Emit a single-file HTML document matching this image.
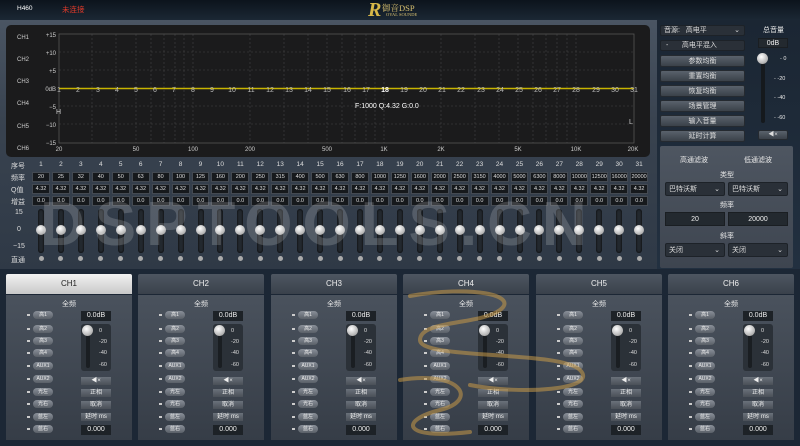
<!DOCTYPE html>
<html><head><meta charset="utf-8"><style>
*{margin:0;padding:0;box-sizing:border-box}
body{width:800px;height:446px;overflow:hidden;background:#1c2735;font-family:"Liberation Sans","Noto Sans CJK SC",sans-serif;color:#e8e8e8;position:relative}
.a{position:absolute}
#hdr{left:0;top:0;width:800px;height:20px;background:linear-gradient(#0c131c,#1b2734)}
#left{left:0;top:20px;width:657px;height:249px;background:linear-gradient(#4a5563,#394350 40%,#2f3946)}
#right{left:657px;top:20px;width:143px;height:249px;background:linear-gradient(#1b2633,#223040)}
#graph{left:6px;top:25px;width:644px;height:132px;background:#1b1b1c;border-radius:5px}
.row{position:absolute;left:31px;width:618px;display:grid;grid-template-columns:repeat(31,19.94px);font-size:6px;text-align:center}
.row span{display:block}
.bx span{background:#16191c;border:1px solid #444a52;margin:0 1px;height:10px;line-height:8px;color:#ddd;font-size:5.5px}
.lbl{position:absolute;font-size:7px;color:#ddd;left:11px}
.sl{position:absolute;left:31px;top:207px;width:618px;height:58px;display:grid;grid-template-columns:repeat(31,19.94px)}
.sl div{position:relative}
.sl div:before{content:"";position:absolute;left:7px;top:2px;width:6px;height:44px;background:#23282e;border-radius:3px;box-shadow:inset 0 0 2px #000}
.sl div:after{content:"";position:absolute;left:5px;top:18px;width:10px;height:10px;border-radius:50%;background:radial-gradient(circle at 40% 35%,#fff,#bbb 60%,#888)}
.sl i{position:absolute;left:7.5px;top:49px;width:5px;height:5px;border-radius:50%;background:#aaa}
.btn{position:absolute;background:linear-gradient(#5a626c,#3a4149);border:1px solid #252a30;border-radius:2px;font-size:7px;text-align:center;color:#ddd}
.sel{position:absolute;background:#2a3038;border:1px solid #1d2228;border-radius:2px;font-size:7px;color:#ddd;padding-left:3px}
.inp{position:absolute;background:#23292f;border:1px solid #1a1e22;font-size:7px;text-align:center;color:#eee}
.tab{position:absolute;top:274px;width:126px;height:20px;background:linear-gradient(#4e5661,#3a414b);font-size:8px;text-align:center;line-height:20px;color:#eee;border-radius:2px 2px 0 0}
.pan{position:absolute;top:295px;width:126px;height:145px;background:linear-gradient(#4a525d,#363d47)}
.pan .t{position:absolute;top:4px;width:100%;text-align:center;font-size:7px}
.pan .ib{position:absolute;left:27px;width:20px;height:8px;border-radius:4px;background:linear-gradient(#8a9099,#5a6068);font-size:5px;text-align:center;line-height:8px;color:#eee}
.pan .ib:before{content:"";position:absolute;left:-6px;top:3px;width:3px;height:2px;background:#ccc}
.pan .db{position:absolute;left:75px;width:30px;height:10px;background:#1d2227;font-size:7px;text-align:center;line-height:10px;color:#eee}
.pan .sb{position:absolute;left:75px;top:29px;width:30px;height:47px;background:#2b3138;border-radius:3px}
.pan .sb:before{content:"";position:absolute;left:5px;top:4px;width:4px;height:40px;background:#1a1e22;border-radius:2px}
.pan .sb:after{content:"";position:absolute;left:1px;top:1px;width:11px;height:11px;border-radius:50%;background:radial-gradient(circle at 40% 35%,#fff,#bbb 60%,#888)}
.pan .sb span{position:absolute;left:18px;font-size:5.5px;color:#ddd}
.pan .pb{position:absolute;left:75px;width:30px;height:8px;background:linear-gradient(#6a717a,#4a5058);font-size:6px;text-align:center;line-height:8px;color:#eee}
</style></head><body>
<div id="hdr" class="a"></div>
<div class="a" style="left:17px;top:5px;font-size:6.5px;color:#fff">H460</div>
<div class="a" style="left:62px;top:4px;font-size:7.5px;color:#e03a2a">未连接</div>
<div class="a" style="left:368px;top:0;font-size:20px;font-weight:bold;font-style:italic;color:#d8b848;font-family:'Liberation Serif',serif;line-height:20px">R</div>
<div class="a" style="left:382px;top:2px;font-size:8.5px;color:#d8c070;font-family:'Liberation Serif','Noto Serif CJK SC',serif">御音DSP</div>
<div class="a" style="left:386px;top:12px;font-size:4.5px;color:#d8c070;font-family:'Liberation Serif',serif">OYAL SOUNDE</div>
<div id="left" class="a"></div>
<div id="right" class="a"></div>
<div id="graph" class="a"></div>
<svg class="a" style="left:0;top:0" width="660" height="160" font-family="Liberation Sans" font-size="6" fill="#ccc">
<g stroke="#444" stroke-dasharray="2,2" stroke-width="0.6">
<line x1="59" y1="52" x2="634" y2="52"/><line x1="59" y1="70" x2="634" y2="70"/><line x1="59" y1="106" x2="634" y2="106"/><line x1="59" y1="124" x2="634" y2="124"/>
<line x1="92" y1="34" x2="92" y2="143"/><line x1="116" y1="34" x2="116" y2="143"/><line x1="136" y1="34" x2="136" y2="143"/><line x1="151" y1="34" x2="151" y2="143"/><line x1="164" y1="34" x2="164" y2="143"/><line x1="175" y1="34" x2="175" y2="143"/><line x1="184" y1="34" x2="184" y2="143"/><line x1="193" y1="34" x2="193" y2="143"/><line x1="250" y1="34" x2="250" y2="143"/><line x1="284" y1="34" x2="284" y2="143"/><line x1="308" y1="34" x2="308" y2="143"/><line x1="327" y1="34" x2="327" y2="143"/><line x1="342" y1="34" x2="342" y2="143"/><line x1="355" y1="34" x2="355" y2="143"/><line x1="366" y1="34" x2="366" y2="143"/><line x1="375" y1="34" x2="375" y2="143"/><line x1="384" y1="34" x2="384" y2="143"/><line x1="441" y1="34" x2="441" y2="143"/><line x1="475" y1="34" x2="475" y2="143"/><line x1="499" y1="34" x2="499" y2="143"/><line x1="518" y1="34" x2="518" y2="143"/><line x1="533" y1="34" x2="533" y2="143"/><line x1="546" y1="34" x2="546" y2="143"/><line x1="557" y1="34" x2="557" y2="143"/><line x1="567" y1="34" x2="567" y2="143"/><line x1="576" y1="34" x2="576" y2="143"/>
</g>
<rect x="59" y="34" width="575" height="109" fill="none" stroke="#555" stroke-width="0.8"/>
<g text-anchor="end"><text x="56" y="37">+15</text><text x="56" y="55">+10</text><text x="56" y="73">+5</text><text x="56" y="91">0dB</text><text x="56" y="109">−5</text><text x="56" y="127">−10</text><text x="56" y="145">−15</text></g>
<g><text x="17" y="39">CH1</text><text x="17" y="61">CH2</text><text x="17" y="83">CH3</text><text x="17" y="105">CH4</text><text x="17" y="128">CH5</text><text x="17" y="150">CH6</text></g>
<g text-anchor="middle"><text x="59" y="151">20</text><text x="136" y="151">50</text><text x="193" y="151">100</text><text x="250" y="151">200</text><text x="327" y="151">500</text><text x="384" y="151">1K</text><text x="441" y="151">2K</text><text x="518" y="151">5K</text><text x="576" y="151">10K</text><text x="633" y="151">20K</text></g>
<line x1="59" y1="88.5" x2="634" y2="88.5" stroke="#c8b400" stroke-width="1.6"/>
<g text-anchor="middle" font-size="7" fill="#bbb"><text x="59" y="92">1</text><text x="78" y="92">2</text><text x="98" y="92">3</text><text x="117" y="92">4</text><text x="136" y="92">5</text><text x="155" y="92">6</text><text x="174" y="92">7</text><text x="193" y="92">8</text><text x="212" y="92">9</text><text x="232" y="92">10</text><text x="251" y="92">11</text><text x="270" y="92">12</text><text x="289" y="92">13</text><text x="308" y="92">14</text><text x="327" y="92">15</text><text x="347" y="92">16</text><text x="366" y="92">17</text><text x="385" y="92" fill="#fff" font-weight="bold">18</text><text x="404" y="92">19</text><text x="423" y="92">20</text><text x="442" y="92">21</text><text x="461" y="92">22</text><text x="481" y="92">23</text><text x="500" y="92">24</text><text x="519" y="92">25</text><text x="538" y="92">26</text><text x="557" y="92">27</text><text x="576" y="92">28</text><text x="596" y="92">29</text><text x="615" y="92">30</text><text x="634" y="92">31</text></g>
<text x="355" y="108" font-size="7" fill="#fff">F:1000 Q:4.32 G:0.0</text>
<text x="56" y="114" font-size="7" fill="#ccc">H</text>
<text x="629" y="124" font-size="7" fill="#ccc">L</text>
</svg>
<div class="lbl" style="top:161px">序号</div>
<div class="lbl" style="top:173px">频率</div>
<div class="lbl" style="top:185px">Q值</div>
<div class="lbl" style="top:197px">增益</div>
<div class="lbl" style="top:209px;left:15px">15</div>
<div class="lbl" style="top:226px;left:17px">0</div>
<div class="lbl" style="top:243px;left:13px">−15</div>
<div class="lbl" style="top:255px">直通</div>
<div class="row" style="top:161px;font-size:6.5px;color:#ddd"><span>1</span><span>2</span><span>3</span><span>4</span><span>5</span><span>6</span><span>7</span><span>8</span><span>9</span><span>10</span><span>11</span><span>12</span><span>13</span><span>14</span><span>15</span><span>16</span><span>17</span><span>18</span><span>19</span><span>20</span><span>21</span><span>22</span><span>23</span><span>24</span><span>25</span><span>26</span><span>27</span><span>28</span><span>29</span><span>30</span><span>31</span></div>
<div class="row bx" style="top:172px"><span>20</span><span>25</span><span>32</span><span>40</span><span>50</span><span>63</span><span>80</span><span>100</span><span>125</span><span>160</span><span>200</span><span>250</span><span>315</span><span>400</span><span>500</span><span>630</span><span>800</span><span>1000</span><span>1250</span><span>1600</span><span>2000</span><span>2500</span><span>3150</span><span>4000</span><span>5000</span><span>6300</span><span>8000</span><span>10000</span><span>12500</span><span>16000</span><span>20000</span></div>
<div class="row bx" style="top:184px"><span>4.32</span><span>4.32</span><span>4.32</span><span>4.32</span><span>4.32</span><span>4.32</span><span>4.32</span><span>4.32</span><span>4.32</span><span>4.32</span><span>4.32</span><span>4.32</span><span>4.32</span><span>4.32</span><span>4.32</span><span>4.32</span><span>4.32</span><span>4.32</span><span>4.32</span><span>4.32</span><span>4.32</span><span>4.32</span><span>4.32</span><span>4.32</span><span>4.32</span><span>4.32</span><span>4.32</span><span>4.32</span><span>4.32</span><span>4.32</span><span>4.32</span></div>
<div class="row bx" style="top:196px"><span>0.0</span><span>0.0</span><span>0.0</span><span>0.0</span><span>0.0</span><span>0.0</span><span>0.0</span><span>0.0</span><span>0.0</span><span>0.0</span><span>0.0</span><span>0.0</span><span>0.0</span><span>0.0</span><span>0.0</span><span>0.0</span><span>0.0</span><span>0.0</span><span>0.0</span><span>0.0</span><span>0.0</span><span>0.0</span><span>0.0</span><span>0.0</span><span>0.0</span><span>0.0</span><span>0.0</span><span>0.0</span><span>0.0</span><span>0.0</span><span>0.0</span></div>
<div class="sl"><div><i></i></div><div><i></i></div><div><i></i></div><div><i></i></div><div><i></i></div><div><i></i></div><div><i></i></div><div><i></i></div><div><i></i></div><div><i></i></div><div><i></i></div><div><i></i></div><div><i></i></div><div><i></i></div><div><i></i></div><div><i></i></div><div><i></i></div><div><i></i></div><div><i></i></div><div><i></i></div><div><i></i></div><div><i></i></div><div><i></i></div><div><i></i></div><div><i></i></div><div><i></i></div><div><i></i></div><div><i></i></div><div><i></i></div><div><i></i></div><div><i></i></div></div>
<div class="a" style="left:40px;top:190px;font-size:62px;font-weight:bold;color:rgba(255,255,255,0.17);letter-spacing:10px;line-height:70px;white-space:nowrap">DSPTOOLS.CN</div>

<div class="sel" style="left:660px;top:25px;width:85px;height:11px;line-height:10px">音源:&nbsp;&nbsp;&nbsp;高电平<span style="position:absolute;right:4px">⌄</span></div>
<div class="sel" style="left:660px;top:40px;width:85px;height:11px;line-height:10px">&nbsp;-&nbsp;&nbsp;&nbsp;&nbsp;&nbsp;&nbsp;&nbsp;高电平混入</div>
<div class="btn" style="left:660px;top:55px;width:85px;height:12px;line-height:11px">参数均衡</div>
<div class="btn" style="left:660px;top:70px;width:85px;height:12px;line-height:11px">重置均衡</div>
<div class="btn" style="left:660px;top:85px;width:85px;height:12px;line-height:11px">恢复均衡</div>
<div class="btn" style="left:660px;top:100px;width:85px;height:12px;line-height:11px">场景管理</div>
<div class="btn" style="left:660px;top:115px;width:85px;height:12px;line-height:11px">输入音量</div>
<div class="btn" style="left:660px;top:130px;width:85px;height:12px;line-height:11px">延时计算</div>
<div class="a" style="left:763px;top:25px;font-size:7px">总音量</div>
<div class="inp" style="left:758px;top:38px;width:30px;height:10px;line-height:9px">0dB</div>
<div class="a" style="left:761px;top:55px;width:4px;height:68px;background:#15191d;border-radius:2px"></div>
<div class="a" style="left:757px;top:53px;width:11px;height:11px;border-radius:50%;background:radial-gradient(circle at 40% 35%,#fff,#bbb 60%,#888)"></div>
<div class="a" style="left:780px;top:56px;font-size:5.5px">- 0</div>
<div class="a" style="left:774px;top:76px;font-size:5.5px">- -20</div>
<div class="a" style="left:774px;top:95px;font-size:5.5px">- -40</div>
<div class="a" style="left:774px;top:115px;font-size:5.5px">- -60</div>
<div class="btn" style="left:758px;top:130px;width:30px;height:10px;line-height:9px;font-size:6px">◀×</div>
<div class="a" style="left:660px;top:146px;width:133px;height:122px;background:linear-gradient(#4e5661,#3e4550);border-radius:2px"></div>
<div class="a" style="left:680px;top:155px;font-size:7px">高通滤波</div>
<div class="a" style="left:744px;top:155px;font-size:7px">低通滤波</div>
<div class="a" style="left:720px;top:170px;font-size:7px">类型</div>
<div class="sel" style="left:665px;top:182px;width:60px;height:14px;line-height:13px">巴特沃斯<span style="position:absolute;right:4px">⌄</span></div>
<div class="sel" style="left:728px;top:182px;width:60px;height:14px;line-height:13px">巴特沃斯<span style="position:absolute;right:4px">⌄</span></div>
<div class="a" style="left:720px;top:200px;font-size:7px">频率</div>
<div class="inp" style="left:665px;top:212px;width:60px;height:14px;line-height:13px">20</div>
<div class="inp" style="left:728px;top:212px;width:60px;height:14px;line-height:13px">20000</div>
<div class="a" style="left:720px;top:231px;font-size:7px">斜率</div>
<div class="sel" style="left:665px;top:243px;width:60px;height:14px;line-height:13px">关闭<span style="position:absolute;right:4px">⌄</span></div>
<div class="sel" style="left:728px;top:243px;width:60px;height:14px;line-height:13px">关闭<span style="position:absolute;right:4px">⌄</span></div>

<div class="tab" style="left:6px;background:linear-gradient(#f2f2f2,#c8c8c8);color:#222">CH1</div>
<div class="tab" style="left:138px">CH2</div>
<div class="tab" style="left:271px">CH3</div>
<div class="tab" style="left:403px">CH4</div>
<div class="tab" style="left:536px">CH5</div>
<div class="tab" style="left:668px">CH6</div>

<div class="pan" style="left:6px"><div class="t">全频</div><div class="ib" style="top:16px">高1</div><div class="ib" style="top:30px">高2</div><div class="ib" style="top:42px">高3</div><div class="ib" style="top:54px">高4</div><div class="ib" style="top:67px">AUX1</div><div class="ib" style="top:80px">AUX2</div><div class="ib" style="top:93px">光左</div><div class="ib" style="top:105px">光右</div><div class="ib" style="top:118px">蓝左</div><div class="ib" style="top:130px">蓝右</div><div class="db" style="top:16px">0.0dB</div><div class="sb"><span style="top:4px">0</span><span style="top:15px">-20</span><span style="top:26px">-40</span><span style="top:38px">-60</span></div><div class="pb" style="top:82px">◀×</div><div class="pb" style="top:94px">正相</div><div class="pb" style="top:106px">取消</div><div class="pb" style="top:118px">延时 ms</div><div class="db" style="top:130px">0.000</div></div>
<div class="pan" style="left:138px"><div class="t">全频</div><div class="ib" style="top:16px">高1</div><div class="ib" style="top:30px">高2</div><div class="ib" style="top:42px">高3</div><div class="ib" style="top:54px">高4</div><div class="ib" style="top:67px">AUX1</div><div class="ib" style="top:80px">AUX2</div><div class="ib" style="top:93px">光左</div><div class="ib" style="top:105px">光右</div><div class="ib" style="top:118px">蓝左</div><div class="ib" style="top:130px">蓝右</div><div class="db" style="top:16px">0.0dB</div><div class="sb"><span style="top:4px">0</span><span style="top:15px">-20</span><span style="top:26px">-40</span><span style="top:38px">-60</span></div><div class="pb" style="top:82px">◀×</div><div class="pb" style="top:94px">正相</div><div class="pb" style="top:106px">取消</div><div class="pb" style="top:118px">延时 ms</div><div class="db" style="top:130px">0.000</div></div>
<div class="pan" style="left:271px"><div class="t">全频</div><div class="ib" style="top:16px">高1</div><div class="ib" style="top:30px">高2</div><div class="ib" style="top:42px">高3</div><div class="ib" style="top:54px">高4</div><div class="ib" style="top:67px">AUX1</div><div class="ib" style="top:80px">AUX2</div><div class="ib" style="top:93px">光左</div><div class="ib" style="top:105px">光右</div><div class="ib" style="top:118px">蓝左</div><div class="ib" style="top:130px">蓝右</div><div class="db" style="top:16px">0.0dB</div><div class="sb"><span style="top:4px">0</span><span style="top:15px">-20</span><span style="top:26px">-40</span><span style="top:38px">-60</span></div><div class="pb" style="top:82px">◀×</div><div class="pb" style="top:94px">正相</div><div class="pb" style="top:106px">取消</div><div class="pb" style="top:118px">延时 ms</div><div class="db" style="top:130px">0.000</div></div>
<div class="pan" style="left:403px"><div class="t">全频</div><div class="ib" style="top:16px">高1</div><div class="ib" style="top:30px">高2</div><div class="ib" style="top:42px">高3</div><div class="ib" style="top:54px">高4</div><div class="ib" style="top:67px">AUX1</div><div class="ib" style="top:80px">AUX2</div><div class="ib" style="top:93px">光左</div><div class="ib" style="top:105px">光右</div><div class="ib" style="top:118px">蓝左</div><div class="ib" style="top:130px">蓝右</div><div class="db" style="top:16px">0.0dB</div><div class="sb"><span style="top:4px">0</span><span style="top:15px">-20</span><span style="top:26px">-40</span><span style="top:38px">-60</span></div><div class="pb" style="top:82px">◀×</div><div class="pb" style="top:94px">正相</div><div class="pb" style="top:106px">取消</div><div class="pb" style="top:118px">延时 ms</div><div class="db" style="top:130px">0.000</div></div>
<div class="pan" style="left:536px"><div class="t">全频</div><div class="ib" style="top:16px">高1</div><div class="ib" style="top:30px">高2</div><div class="ib" style="top:42px">高3</div><div class="ib" style="top:54px">高4</div><div class="ib" style="top:67px">AUX1</div><div class="ib" style="top:80px">AUX2</div><div class="ib" style="top:93px">光左</div><div class="ib" style="top:105px">光右</div><div class="ib" style="top:118px">蓝左</div><div class="ib" style="top:130px">蓝右</div><div class="db" style="top:16px">0.0dB</div><div class="sb"><span style="top:4px">0</span><span style="top:15px">-20</span><span style="top:26px">-40</span><span style="top:38px">-60</span></div><div class="pb" style="top:82px">◀×</div><div class="pb" style="top:94px">正相</div><div class="pb" style="top:106px">取消</div><div class="pb" style="top:118px">延时 ms</div><div class="db" style="top:130px">0.000</div></div>
<div class="pan" style="left:668px"><div class="t">全频</div><div class="ib" style="top:16px">高1</div><div class="ib" style="top:30px">高2</div><div class="ib" style="top:42px">高3</div><div class="ib" style="top:54px">高4</div><div class="ib" style="top:67px">AUX1</div><div class="ib" style="top:80px">AUX2</div><div class="ib" style="top:93px">光左</div><div class="ib" style="top:105px">光右</div><div class="ib" style="top:118px">蓝左</div><div class="ib" style="top:130px">蓝右</div><div class="db" style="top:16px">0.0dB</div><div class="sb"><span style="top:4px">0</span><span style="top:15px">-20</span><span style="top:26px">-40</span><span style="top:38px">-60</span></div><div class="pb" style="top:82px">◀×</div><div class="pb" style="top:94px">正相</div><div class="pb" style="top:106px">取消</div><div class="pb" style="top:118px">延时 ms</div><div class="db" style="top:130px">0.000</div></div>

<svg class="a" style="left:0;top:0;pointer-events:none" width="800" height="446">
<g fill="none" stroke="#c89a48" stroke-linecap="round" opacity="0.55">
<path d="M410 296 C470 285 520 295 500 310 C480 325 420 320 420 340 C420 360 560 350 580 370 C600 390 520 395 470 385" stroke-width="4"/>
<path d="M400 380 C460 370 480 400 440 410 C400 420 400 440 470 432" stroke-width="4"/>
</g>
</svg>
</body></html>
